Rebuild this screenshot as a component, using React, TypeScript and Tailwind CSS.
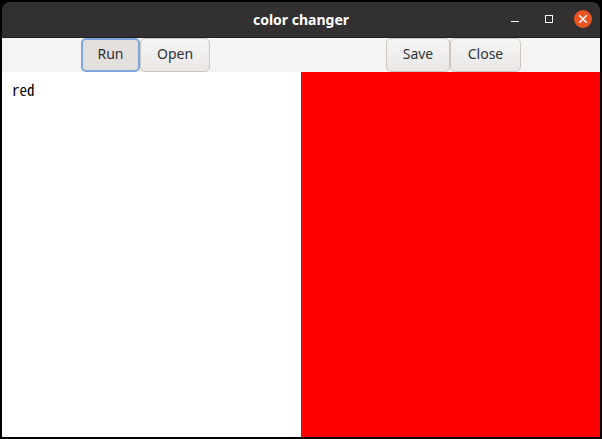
import { useState } from "react";
import type { ButtonHTMLAttributes } from "react";

function ToolButton({ className = "", ...rest }: ButtonHTMLAttributes<HTMLButtonElement>) {
  return (
    <button
      type="button"
      className={`h-[34px] rounded-[5px] pb-[2px] text-center text-[14px] leading-5 text-[#2e3436] outline-none ${className}`}
      {...rest}
    />
  );
}

const plain = "border border-[#cdc7c2] bg-linear-to-b from-[#f6f5f4] to-[#e9e8e6]";

export default function App() {
  const [text, setText] = useState("red");
  const [color, setColor] = useState("#ff0000");

  return (
    <div className="flex min-h-screen flex-col bg-black p-[2px] font-['Noto_Sans',sans-serif]">
      <header className="grid h-9 shrink-0 grid-cols-[1fr_auto_1fr] items-center rounded-t-lg border-b border-[#201f1f] bg-[#323031] text-white">
        <span />
        <h1 className="text-[14px] leading-5 font-bold">color changer</h1>
        <div className="flex items-center justify-end gap-4 pr-2 pb-px">
          <button type="button" aria-label="Minimize" className="size-[18px]">
            <svg viewBox="0 0 18 18" className="size-[18px]" shapeRendering="crispEdges">
              <path d="M5 11h8v1H5z" fill="#fff" />
            </svg>
          </button>
          <button type="button" aria-label="Maximize" className="size-[18px]">
            <svg viewBox="0 0 18 18" className="size-[18px]" shapeRendering="crispEdges">
              <path d="M5.5 5.5h7v7h-7z" fill="none" stroke="#fff" />
            </svg>
          </button>
          <button type="button" aria-label="Close window" className="size-[18px] rounded-full bg-[#e95420]">
            <svg viewBox="0 0 18 18" className="size-[18px]">
              <path d="M5.2 5.2l7.6 7.6M12.8 5.2l-7.6 7.6" stroke="#fff" strokeWidth="1.5" />
            </svg>
          </button>
        </div>
      </header>
      <div className="flex shrink-0 justify-between bg-[#f5f4f2] px-[79px]">
        <div className="flex">
          <ToolButton
            className="w-[59px] border-2 border-[#7da7dc] bg-[#e3dfdc]"
            onClick={() => setColor(text.trim())}
          >
            Run
          </ToolButton>
          <ToolButton className={`w-[70px] ${plain}`}>Open</ToolButton>
        </div>
        <div className="flex">
          <ToolButton className={`w-16 ${plain}`}>Save</ToolButton>
          <ToolButton className={`w-[71px] ${plain}`}>Close</ToolButton>
        </div>
      </div>
      <main className="grid flex-1 grid-cols-2">
        <textarea
          aria-label="Color name"
          spellCheck={false}
          value={text}
          onChange={(e) => setText(e.target.value)}
          className="resize-none bg-white px-[10px] py-2 font-['Noto_Sans_Mono_CJK_JP','DejaVu_Sans_Mono',monospace] text-[15px] leading-5 text-black outline-none"
        />
        <div style={{ backgroundColor: color }} />
      </main>
    </div>
  );
}
